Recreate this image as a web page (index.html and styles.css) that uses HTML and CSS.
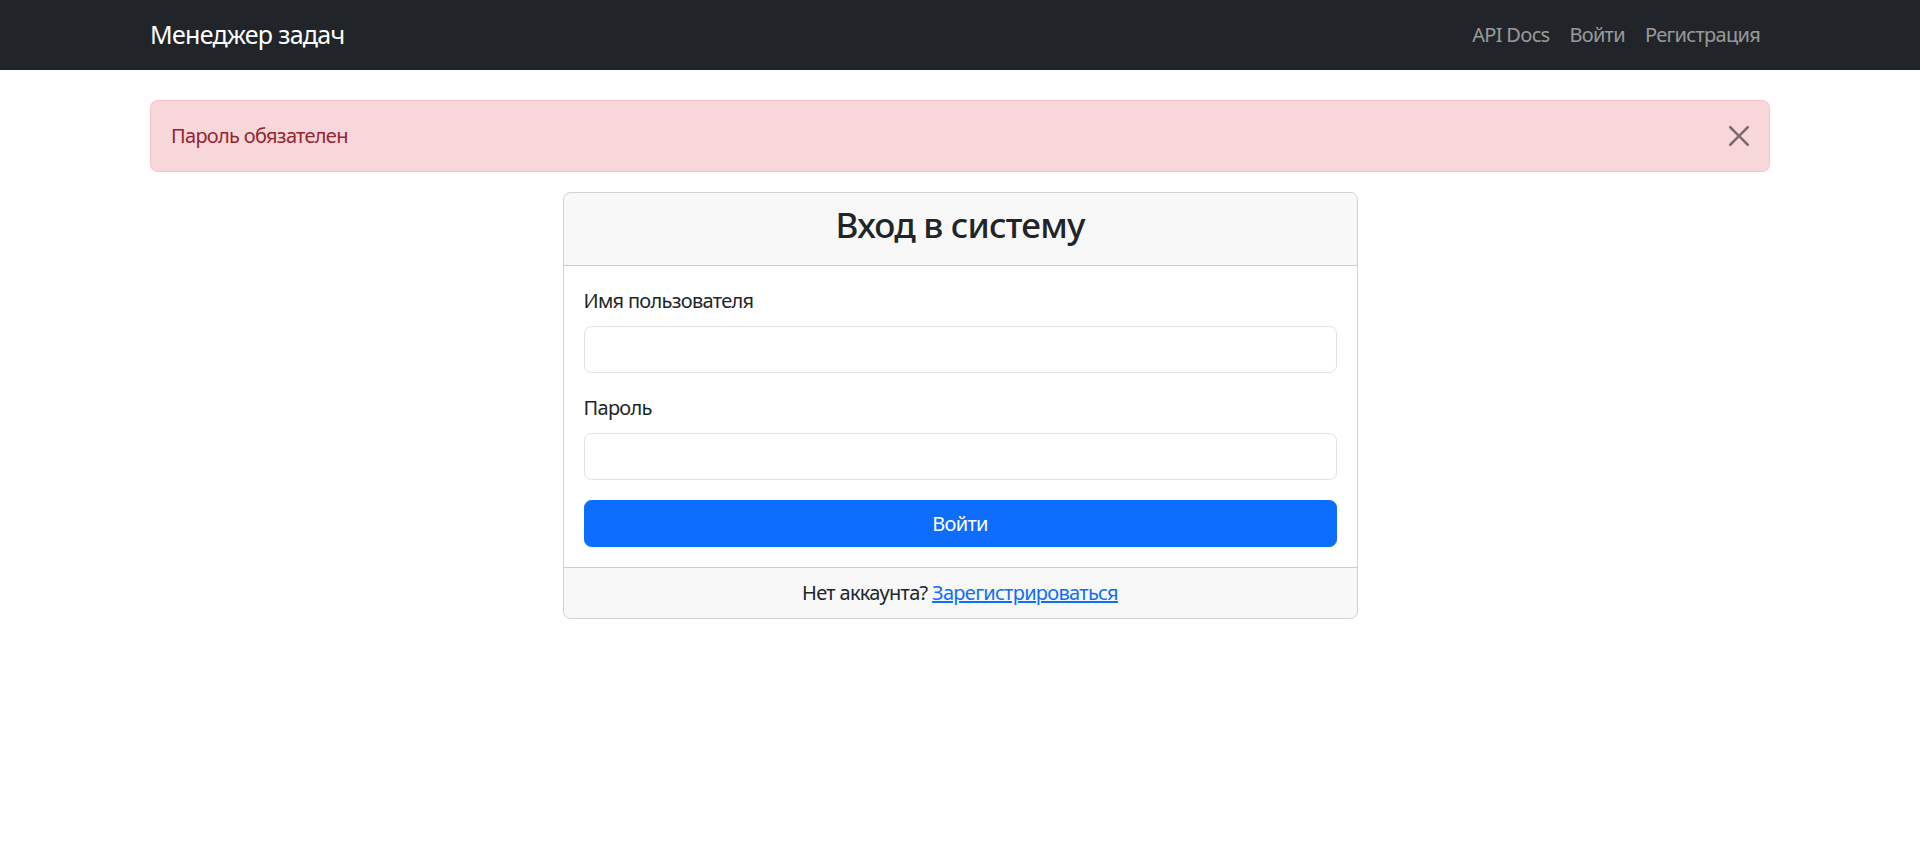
FILE: index.html
```html
<!DOCTYPE html>
<html lang="ru">
<head>
<meta charset="utf-8">
<title>Вход в систему — Менеджер задач</title>
<link rel="stylesheet" href="styles.css">
</head>
<body>
<nav class="navbar">
  <div class="container navbar-inner">
    <a class="brand" href="#">Менеджер задач</a>
    <ul class="nav-links">
      <li><a class="nav-link" href="#">API Docs</a></li>
      <li><a class="nav-link" href="#">Войти</a></li>
      <li><a class="nav-link" href="#">Регистрация</a></li>
    </ul>
  </div>
</nav>
<main class="container">
  <div class="alert" role="alert">
    Пароль обязателен
    <button class="btn-close" type="button" aria-label="Close">
      <svg viewBox="0 0 16 16" width="20" height="20" aria-hidden="true"><path d="M.293.293a1 1 0 0 1 1.414 0L8 6.586 14.293.293a1 1 0 1 1 1.414 1.414L9.414 8l6.293 6.293a1 1 0 0 1-1.414 1.414L8 9.414l-6.293 6.293a1 1 0 0 1-1.414-1.414L6.586 8 .293 1.707a1 1 0 0 1 0-1.414z"/></svg>
    </button>
  </div>
  <div class="login-col">
    <div class="card">
      <div class="card-header">
        <h3 class="card-title">Вход в систему</h3>
      </div>
      <div class="card-body">
        <form>
          <div class="field">
            <label class="form-label" for="username">Имя пользователя</label>
            <input class="form-control" id="username" type="text">
          </div>
          <div class="field">
            <label class="form-label" for="password">Пароль</label>
            <input class="form-control" id="password" type="password">
          </div>
          <button class="btn-primary" type="submit">Войти</button>
        </form>
      </div>
      <div class="card-footer">
        Нет аккаунта? <a class="link" href="#">Зарегистрироваться</a>
      </div>
    </div>
  </div>
</main>
</body>
</html>
```
FILE: styles.css
```css
* { box-sizing: border-box; }
html, body { margin: 0; padding: 0; }
body {
  font-family: "Segoe UI", "Noto Sans", "Open Sans", sans-serif;
  font-size: 20px;
  line-height: 30px;
  letter-spacing: -0.7px;
  color: #212529;
  background: #fff;
}
.container {
  max-width: 1650px;
  margin: 0 auto;
  padding: 0 15px;
}
.navbar {
  background: #212529;
  padding: 10px 0;
}
.navbar-inner {
  display: flex;
  align-items: center;
  justify-content: space-between;
}
.brand {
  color: #fff;
  text-decoration: none;
  font-size: 25px;
  line-height: 37.5px;
  padding: 6.25px 0;
}
.nav-links {
  display: flex;
  list-style: none;
  margin: 0;
  padding: 0;
}
.nav-link {
  display: block;
  color: rgba(255,255,255,.55);
  text-decoration: none;
  padding: 10px;
}
.alert {
  position: relative;
  margin: 30px 0 20px;
  padding: 20px 60px 20px 20px;
  background: #f8d7da;
  border: 1px solid #f5c2c7;
  border-radius: 7.5px;
  color: #962530;
}
.btn-close {
  position: absolute;
  top: 0;
  right: 0;
  padding: 25px 20px;
  width: 60px;
  height: 70px;
  border: 0;
  background: transparent;
  opacity: .5;
  display: flex;
  align-items: center;
  justify-content: center;
  cursor: pointer;
}
.btn-close svg { fill: #000; display: block; }
.login-col {
  width: 795px;
  margin: 0 auto;
}
.card {
  border: 1px solid rgba(0,0,0,.175);
  border-radius: 7.5px;
  overflow: hidden;
}
.card-header {
  padding: 11px 20px 9px;
  background: rgba(33,37,41,.03);
  border-bottom: 1px solid rgba(0,0,0,.175);
}
.card-title {
  margin: 0 0 10px;
  font-size: 35px;
  font-weight: 500;
  line-height: 42px;
  letter-spacing: -0.8px;
  text-align: center;
}
.card-body { padding: 20px; }
.field { margin-bottom: 20px; }
.form-label {
  display: block;
  margin-bottom: 10px;
}
.form-control {
  display: block;
  width: 100%;
  height: 47px;
  padding: 7px 15px;
  font: inherit;
  color: #212529;
  border: 1px solid #dee2e6;
  border-radius: 7.5px;
  background: #fff;
}
.btn-primary {
  display: block;
  width: 100%;
  height: 47px;
  padding: 7px 15px;
  font: inherit;
  letter-spacing: inherit;
  color: #fff;
  background: #0d6efd;
  border: 1px solid #0d6efd;
  border-radius: 7.5px;
  cursor: pointer;
}
.card-footer {
  padding: 10px 20px;
  text-align: center;
  background: rgba(33,37,41,.03);
  border-top: 1px solid rgba(0,0,0,.175);
}
.link { color: #0d6efd; }
```
